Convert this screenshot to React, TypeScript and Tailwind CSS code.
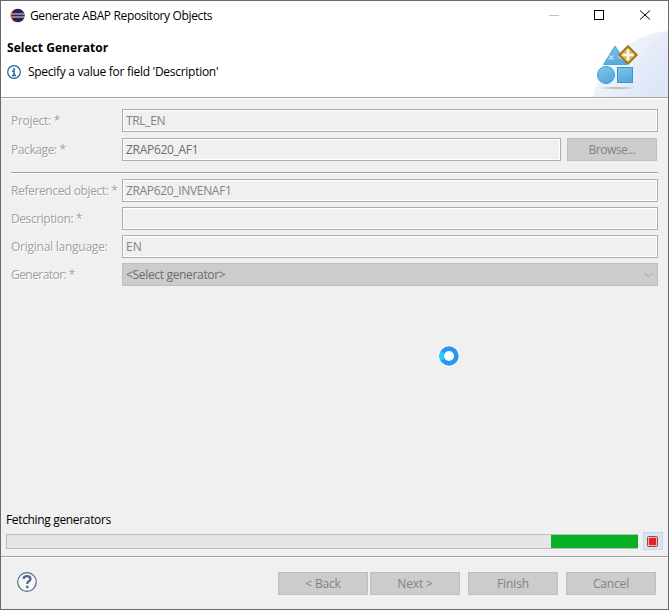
import type { ReactNode } from 'react';

function Field({ label, value, labelTracking, tracking = '', dark = false, action }: { label: string; value: string; labelTracking: string; tracking?: string; dark?: boolean; action?: ReactNode }) {
  return (
    <div className="flex h-[23px] items-center">
      <label className={`w-[111px] shrink-0 whitespace-nowrap text-[#a0a0a0] [text-shadow:1px_1px_0_#fff] ${labelTracking}`}>{label}</label>
      <div className={`flex h-[23px] flex-1 items-center border border-[#abadb3] bg-[#f0f0f0] pl-[3px] shadow-[inset_0_0_0_1px_#fff] ${dark ? 'text-[#6d6d6d]' : 'text-[#838383]'}`}>
        <span className={`whitespace-nowrap ${tracking}`}>{value}</span>
      </div>
      {action}
    </div>
  );
}

function Button({ children, className = '' }: { children: ReactNode; className?: string }) {
  return (
    <button className={`flex h-[23px] w-[90px] shrink-0 items-center justify-center border border-[#bfbfbf] bg-[#cccccc] text-[#838383] ${className}`}>
      {children}
    </button>
  );
}

function Separator() {
  return <div className="h-[2px] shrink-0 border-b border-white bg-[#a0a0a0]" />;
}

function EclipseIcon() {
  return (
    <svg width="15" height="15" viewBox="0 0 15 15">
      <circle cx="7" cy="7.5" r="6.8" fill="#f7941e" />
      <circle cx="8" cy="7.5" r="6.7" fill="#2c2255" />
      <path d="M1.4 6h13.2M1.4 9h13.2" stroke="#e4e2ef" strokeWidth="1" />
    </svg>
  );
}

function GeneratorIcon() {
  return (
    <svg width="150" height="96" viewBox="519 1 150 96">
      <defs>
        <linearGradient id="sweep" x1="0" y1="0" x2="1" y2="0.5">
          <stop offset="0" stopColor="#f6f8fd" />
          <stop offset="1" stopColor="#dbe4f6" />
        </linearGradient>
        <linearGradient id="shape" x1="0" y1="0" x2="0.4" y2="1">
          <stop offset="0" stopColor="#86c5ea" />
          <stop offset="1" stopColor="#55abdb" />
        </linearGradient>
        <radialGradient id="shade">
          <stop offset="0" stopColor="#a8a8a8" />
          <stop offset="1" stopColor="#a8a8a8" stopOpacity="0" />
        </radialGradient>
      </defs>
      <path d="M593 97Q600 59 633 42Q650 32 669 31V97Z" fill="url(#sweep)" opacity="0.75" />
      <path d="M624 97Q630 48 669 32V97Z" fill="#dce4f7" opacity="0.25" />
      <path d="M593 97Q607 59 669 51V97Z" fill="url(#sweep)" opacity="0.6" />
      <ellipse cx="617" cy="88" rx="19" ry="1.6" fill="url(#shade)" />
      <path d="M615 46L627 64.5H603.5Z" fill="url(#shape)" stroke="#4aa5d8" />
      <path d="M609 55.5l4.5 4m0-4l-4.5 4m9-4l4 4" stroke="#c5e1f2" strokeWidth="1.2" />
      <circle cx="606" cy="75" r="8.5" fill="url(#shape)" stroke="#3c9cd2" />
      <rect x="617.5" y="67.5" width="15" height="15" fill="url(#shape)" stroke="#3598d0" />
      <path d="M628 46.3L636.7 55L628 63.7L619.3 55Z" fill="#d9b968" stroke="#a3760f" strokeWidth="2" />
      <path d="M628 49.5V60.5M622.5 55H633.5" stroke="#fffae8" strokeWidth="2.6" />
    </svg>
  );
}

export default function App() {
  return (
    <div className="relative flex h-[610px] w-[669px] flex-col overflow-hidden border border-[#6b696b] bg-[#f0f0f0] font-['Open_Sans','Noto_Sans',sans-serif] text-[12px] leading-4 text-black">
      <header className="relative h-[96px] shrink-0 bg-white">
        <div className="absolute right-[-1px] top-0"><GeneratorIcon /></div>
        <div className="relative flex h-[29px] items-center pl-[9px]">
          <EclipseIcon />
          <h1 className="ml-[5px] whitespace-nowrap tracking-[-0.36px]">Generate ABAP Repository Objects</h1>
          <svg className="ml-auto" width="120" height="29" viewBox="548 1 120 29" fill="none" shapeRendering="crispEdges">
            <path d="M549 15.5h10" stroke="#c4c4c4" />
            <rect x="594.5" y="10.5" width="9" height="9" stroke="#000" />
            <path d="M640 10.5l10 9M650 10.5l-10 9" stroke="#000" shapeRendering="auto" />
          </svg>
        </div>
        <h2 className="relative mt-[10px] whitespace-nowrap pl-[6px] font-bold tracking-[0.04px]">Select Generator</h2>
        <div className="relative mt-2 flex items-center pl-[6px]">
          <svg width="14" height="14" viewBox="0 0 14 14" fill="none" stroke="#20659c">
            <circle cx="7" cy="7" r="6.3" fill="#fff" strokeWidth="1.2" />
            <path d="M7 3v2M5 6h2v4.5M5 10.5h4" strokeWidth="1.5" />
          </svg>
          <span className="ml-[7px] whitespace-nowrap tracking-[-0.28px]">Specify a value for field 'Description'</span>
        </div>
      </header>
      <Separator />
      <main className="flex flex-col pl-[10px] pr-[10px] pt-[10px]">
        <Field label="Project: *" value="TRL_EN" labelTracking="tracking-[-0.3px]" tracking="tracking-[-0.35px]" />
        <div className="mt-[6px]">
          <Field label="Package: *" value="ZRAP620_AF1" labelTracking="tracking-[-0.4px]" tracking="tracking-[-0.3px]" dark action={<Button className="ml-[6px] mr-px tracking-[-0.45px]">Browse...</Button>} />
        </div>
        <div className="mb-[5px] mt-[11px]"><Separator /></div>
        <div className="flex flex-col gap-[5px]">
          <Field label="Referenced object: *" value="ZRAP620_INVENAF1" labelTracking="tracking-[-0.38px]" tracking="tracking-[-0.33px]" />
          <Field label="Description: *" value="" labelTracking="tracking-[-0.42px]" />
          <Field label="Original language:" value="EN" labelTracking="tracking-[-0.25px]" />
          <div className="flex h-[23px] items-center">
            <label className="w-[111px] tracking-[-0.55px] text-[#a0a0a0] [text-shadow:1px_1px_0_#fff]">Generator: *</label>
            <div className="flex h-[23px] flex-1 items-center justify-between border border-[#bfbfbf] bg-[#cccccc] pl-[3px] pr-1 text-[#6d6d6d]">
              <span className="tracking-[-0.33px]">&lt;Select generator&gt;</span>
              <svg width="9" height="6" viewBox="0 0 9 6" fill="none"><path d="M.5 1l4 4 4-4" stroke="#a0a0a0" /></svg>
            </div>
          </div>
        </div>
      </main>
      <svg className="absolute left-[437px] top-[344px]" width="22" height="22" viewBox="0 0 22 22" fill="none">
        <circle cx="11" cy="11" r="10.4" fill="#fff" opacity="0.8" />
        <circle cx="11" cy="11" r="7.4" stroke="#2695f3" strokeWidth="4.6" />
        <path d="M4.8 7A7.4 7.4 0 0 0 4.8 15" stroke="#22ccff" strokeWidth="4.6" />
      </svg>
      <footer className="mt-auto">
        <p className="mb-1 pl-[5px] tracking-[-0.34px]">Fetching generators</p>
        <div className="flex h-[18px] items-center pl-[5px]">
          <div className="flex h-[15px] w-[632px] justify-end border border-[#bcbcbc] bg-[#e6e6e6]">
            <div className="mr-[-1px] h-[13px] w-[87px] bg-[#06b025]" />
          </div>
          <button className="ml-[5px] flex h-[18px] w-[20px] items-center justify-center border border-[#b9daf2] bg-[#d8e6f2]">
            <svg className="mr-px" width="11" height="11" viewBox="0 0 11 11">
              <rect x=".5" y=".5" width="10" height="10" rx="1" fill="#f3b6b6" stroke="#b53a3a" />
              <rect x="2" y="2" width="7" height="7" fill="#e3232b" />
            </svg>
          </button>
        </div>
        <div className="mt-[6px]"><Separator /></div>
        <div className="flex h-[51px] items-center pl-[16px] pr-[12px]">
          <svg className="-mt-[3px]" width="20" height="20" viewBox="0 0 20 20" fill="none" stroke="#52698c">
            <circle cx="10" cy="10" r="9.3" strokeWidth="1.2" fill="#f8f8f8" />
            <path d="M6.5 6.8Q6.8 4.2 10 4.2Q13.5 4.2 13.5 7Q13.5 8.3 11.8 9.2Q10.3 10 10.3 12" strokeWidth="2.3" />
            <path d="M10.3 13.8v2.4" strokeWidth="2.4" />
          </svg>
          <Button className="ml-auto tracking-[-0.15px]">&lt; Back</Button>
          <Button className="ml-[2px] tracking-[-0.15px]">Next &gt;</Button>
          <Button className="ml-2 tracking-[-0.1px]">Finish</Button>
          <Button className="ml-2 tracking-[-0.15px]">Cancel</Button>
        </div>
      </footer>
    </div>
  );
}
